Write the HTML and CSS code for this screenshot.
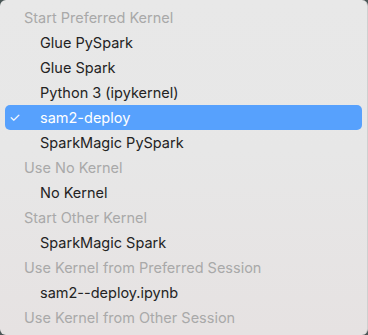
FILE: index.html
```html
<!DOCTYPE html>
<html>
<head>
<meta charset="utf-8">
<link rel="stylesheet" href="styles.css">
</head>
<body>
<div class="menu">
  <div class="row header">Start Preferred Kernel</div>
  <div class="row item">Glue PySpark</div>
  <div class="row item">Glue Spark</div>
  <div class="row item">Python 3 (ipykernel)</div>
  <div class="row item selected"><span class="check">✓</span>sam2-deploy</div>
  <div class="row item">SparkMagic PySpark</div>
  <div class="row header">Use No Kernel</div>
  <div class="row item">No Kernel</div>
  <div class="row header">Start Other Kernel</div>
  <div class="row item">SparkMagic Spark</div>
  <div class="row header">Use Kernel from Preferred Session</div>
  <div class="row item">sam2--deploy.ipynb</div>
  <div class="row header">Use Kernel from Other Session</div>
</div>
</body>
</html>
```
FILE: styles.css
```css
html, body {
  margin: 0;
  padding: 0;
  background: #4a5656;
}
.menu {
  box-sizing: border-box;
  width: 368px;
  height: 335px;
  padding: 5px 5px 5px 5px;
  border-radius: 6px;
  border-right: 1px solid #cfcfcf;
  background: linear-gradient(to bottom, #e8e8e8 0%, #e7e7e7 45%, #e6e2e2 100%);
  font-family: Inter, "Liberation Sans", sans-serif;
  font-size: 14.5px;
  display: flex;
  flex-direction: column;
}
.row {
  height: 25px;
  line-height: 25px;
  display: flex;
  align-items: center;
  border-radius: 5px;
  position: relative;
  white-space: nowrap;
}
.header {
  color: #a9a9a9;
  padding-left: 19px;
}
.item {
  color: #232323;
  padding-left: 35px;
}
.selected {
  background: #57a1fd;
  color: #ffffff;
}
.check {
  position: absolute;
  left: 4px;
  font-size: 13px;
}
```
